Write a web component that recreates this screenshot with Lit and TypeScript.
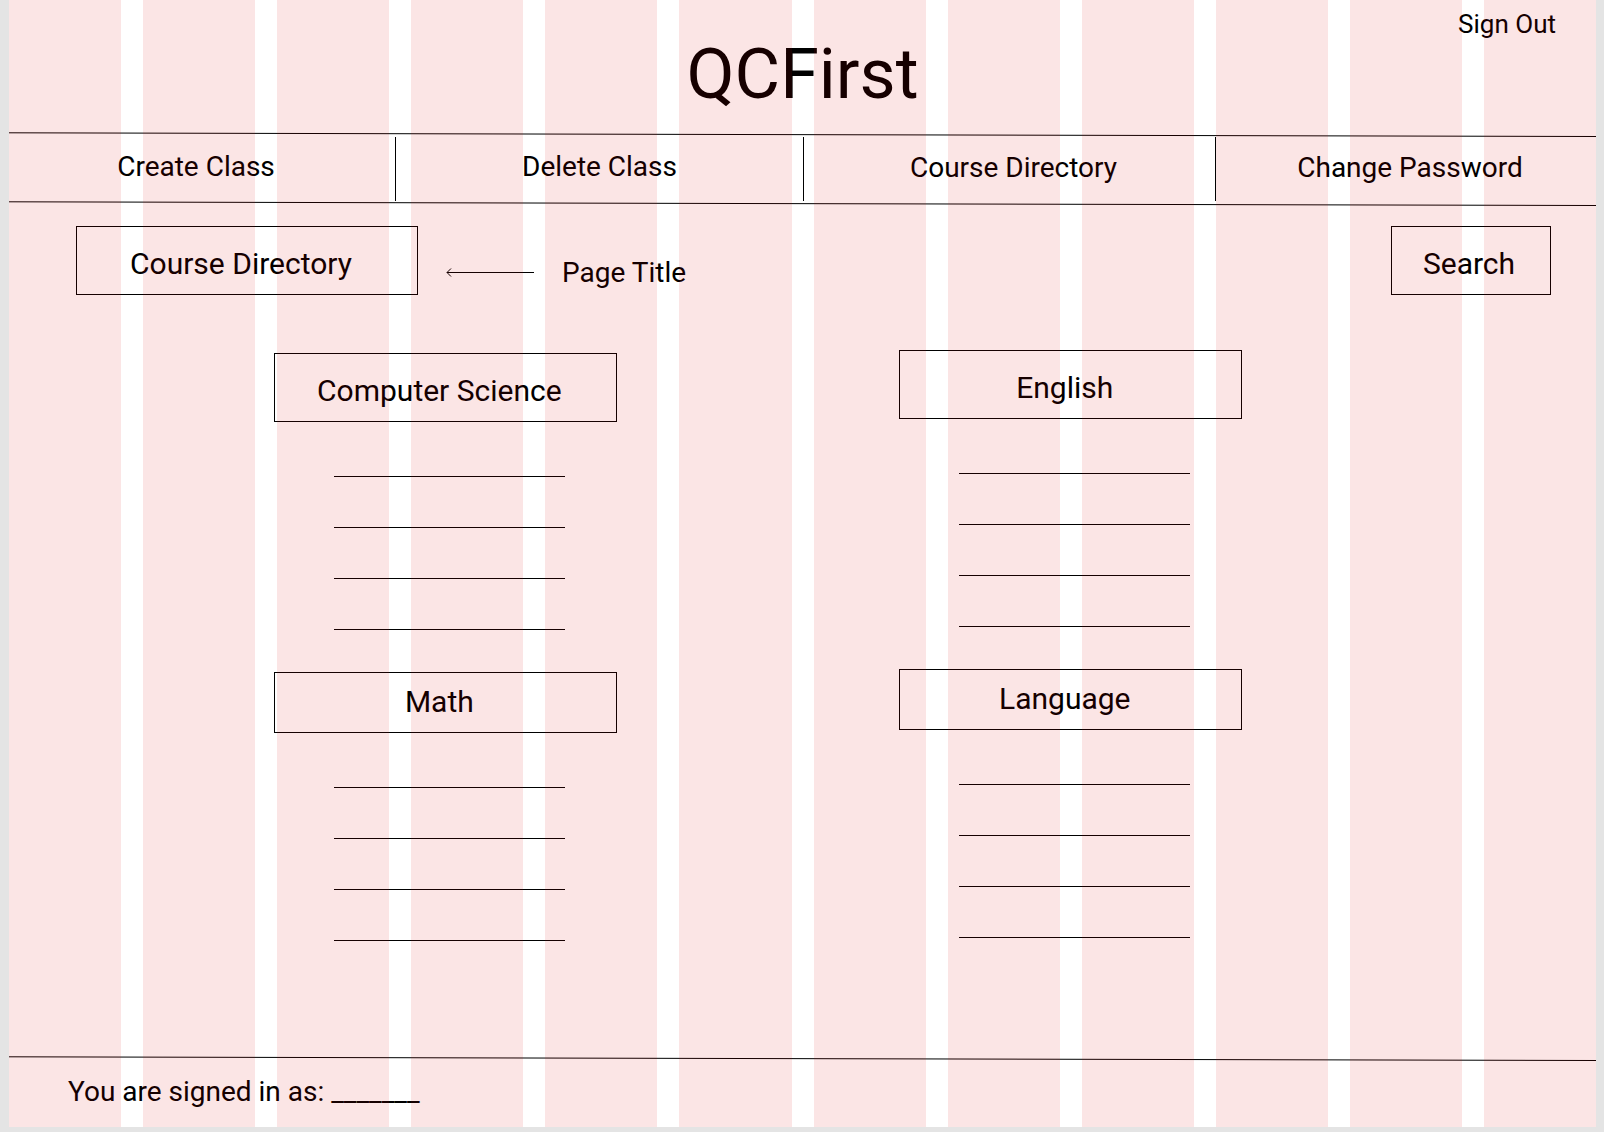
import { LitElement, html, css } from "lit";
import { customElement, property } from "lit/decorators.js";

interface Subject {
  name: string;
  compact: boolean;
}

const NAV = [
  { label: "Create Class", lean: "lean-left" },
  { label: "Delete Class", lean: "" },
  { label: "Course Directory", lean: "lean-right" },
  { label: "Change Password", lean: "lean-right" },
];

const COLUMNS: Subject[][] = [
  [
    { name: "Computer Science", compact: false },
    { name: "Math", compact: true },
  ],
  [
    { name: "English", compact: false },
    { name: "Language", compact: true },
  ],
];

/** A full-width rule that drops slightly from left to right. */
@customElement("slant-rule")
export class SlantRule extends LitElement {
  static styles = css`
    :host {
      display: block;
    }
    .rule {
      display: block;
      width: 100%;
      height: 5px;
    }
    .stroke {
      stroke: #000;
      stroke-width: 1;
      vector-effect: non-scaling-stroke;
    }
  `;

  render() {
    return html`
      <svg class="rule" viewBox="0 0 100 5" preserveAspectRatio="none" aria-hidden="true">
        <line class="stroke" x1="0" y1="0.8" x2="100" y2="4.5"></line>
      </svg>
    `;
  }
}

/** A subject heading with blank lines for its courses. */
@customElement("subject-block")
export class SubjectBlock extends LitElement {
  @property() name = "";
  @property({ type: Boolean }) compact = false;

  static styles = css`
    :host {
      display: block;
    }
    .name {
      box-sizing: border-box;
      display: flex;
      align-items: center;
      justify-content: center;
      height: 69px;
      margin: 0;
      padding: 6px 12px 0 0;
      border: 1px solid #000;
      font-size: 30px;
      font-weight: 400;
      line-height: 34px;
    }
    .name.compact {
      height: 61px;
      padding: 0 12px 2px 0;
    }
    .courses {
      display: grid;
      gap: 50px;
      margin: 0;
      padding: 54px 52px 0 60px;
      list-style: none;
    }
    .course {
      height: 1px;
      background: #000;
    }
  `;

  render() {
    return html`
      <h3 class="name ${this.compact ? "compact" : ""}">${this.name}</h3>
      <ul class="courses">
        ${[0, 1, 2, 3].map(() => html`<li class="course"></li>`)}
      </ul>
    `;
  }
}

@customElement("app-root")
export class AppRoot extends LitElement {
  static styles = css`
    :host {
      display: block;
      box-sizing: border-box;
      min-height: 100vh;
      padding: 0 8px 5px 9px;
      background: #e4e4e4;
      color: #000;
      font-family: Roboto, "Liberation Sans", sans-serif;
      font-size: 28px;
      line-height: 32px;
    }
    a {
      color: inherit;
      text-decoration: none;
    }
    .board {
      position: relative;
      display: flex;
      flex-direction: column;
      min-height: calc(100vh - 5px);
      background: #fff;
    }
    /* Layout-grid tint lying over the whole board. */
    .overlay {
      position: absolute;
      inset: 0;
      display: grid;
      grid-template-columns: repeat(12, 1fr);
      gap: 22px;
      pointer-events: none;
    }
    .stripe {
      background: rgba(214, 4, 0, 0.102);
    }
    .header {
      display: flex;
      flex-direction: column;
      align-items: center;
      padding: 8px 40px 24px;
    }
    .sign-out {
      align-self: flex-end;
      font-size: 26px;
    }
    .brand {
      margin: 0;
      font-size: 70px;
      font-weight: 400;
      line-height: 68px;
    }
    .nav {
      display: grid;
      grid-template-columns: 387fr 408fr 412fr 380fr;
      height: 64px;
    }
    .nav-link {
      display: flex;
      align-items: center;
      justify-content: center;
      padding-bottom: 5px;
      border-right: 1px solid #000;
    }
    .nav-link:last-child {
      border-right: 0;
    }
    .lean-left {
      padding-right: 12px;
    }
    .lean-right {
      padding-bottom: 3px;
      padding-left: 8px;
    }
    .main {
      flex: 1;
    }
    .toolbar {
      display: flex;
      align-items: center;
      gap: 28px;
      padding: 20px 45px 0 67px;
    }
    .page-title,
    .search {
      box-sizing: border-box;
      display: flex;
      align-items: center;
      justify-content: center;
      height: 69px;
      margin: 0;
      border: 1px solid #000;
      font-size: 30px;
      font-weight: 400;
      line-height: 34px;
    }
    .page-title {
      width: 342px;
      padding: 6px 12px 0 0;
    }
    .search {
      width: 160px;
      margin-left: auto;
      padding: 6px 4px 0 0;
      background: none;
      color: inherit;
      font-family: inherit;
    }
    .note {
      display: flex;
      align-items: center;
      gap: 28px;
      padding-top: 24px;
    }
    .arrow {
      display: block;
      width: 88px;
      height: 10px;
      fill: none;
      stroke: #000;
      stroke-width: 1;
    }
    .subjects {
      display: grid;
      grid-template-columns: 343fr 283fr 343fr;
      margin: 0;
      padding: 55px 22.3% 40px 16.7%;
    }
    .column {
      display: grid;
      gap: 42px;
      align-content: start;
    }
    .column:first-child {
      padding-top: 3px;
    }
    .column:last-child {
      grid-column: 3;
    }
    .footer {
      padding: 15px 60px 19px 59px;
    }
  `;

  render() {
    return html`
      <div class="board">
        <header class="header">
          <a class="sign-out" href="#">Sign Out</a>
          <h1 class="brand">QCFirst</h1>
        </header>
        <slant-rule></slant-rule>
        <nav class="nav">
          ${NAV.map((item) => html`<a class="nav-link ${item.lean}" href="#">${item.label}</a>`)}
        </nav>
        <slant-rule></slant-rule>
        <main class="main">
          <div class="toolbar">
            <h2 class="page-title">Course Directory</h2>
            <div class="note">
              <svg class="arrow" viewBox="0 0 88 10" aria-hidden="true">
                <path d="M88 4.5H1M5 0.5L1 4.5L5 8.5"></path>
              </svg>
              <span>Page Title</span>
            </div>
            <button class="search" type="button">Search</button>
          </div>
          <div class="subjects">
            ${COLUMNS.map(
              (column) => html`
                <div class="column">
                  ${column.map(
                    (s) => html`<subject-block .name=${s.name} .compact=${s.compact}></subject-block>`
                  )}
                </div>
              `
            )}
          </div>
        </main>
        <slant-rule></slant-rule>
        <footer class="footer">You are signed in as: _______</footer>
        <div class="overlay" aria-hidden="true">
          ${Array.from({ length: 12 }, () => html`<div class="stripe"></div>`)}
        </div>
      </div>
    `;
  }
}
